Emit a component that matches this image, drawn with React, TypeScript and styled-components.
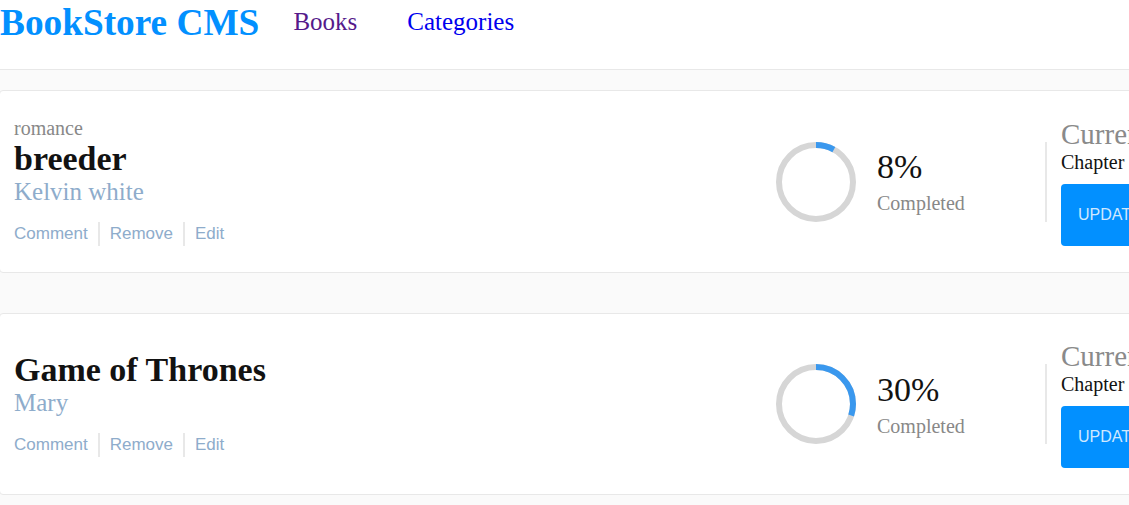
import React from 'react';
import styled, { createGlobalStyle } from 'styled-components';

const GlobalStyle = createGlobalStyle`
  html, body {
    margin: 0;
    padding: 0;
    overflow: hidden;
    background: #fafafa;
  }
  body {
    font-family: "Liberation Serif", "Times New Roman", serif;
  }
  * { box-sizing: border-box; }
`;

const Page = styled.div`
  width: 1129px;
  min-height: 505px;
  overflow: hidden;
  background: #fafafa;
`;

const Header = styled.header`
  display: flex;
  align-items: center;
  height: 70px;
  padding-bottom: 25px;
  background: #fff;
  border-bottom: 1px solid #e8e8e8;
`;

const Logo = styled.h1`
  margin: 0;
  font-size: 37.3px;
  font-weight: 700;
  color: #0290ff;
  white-space: nowrap;
`;

const Nav = styled.nav`
  display: flex;
  gap: 50px;
  margin-left: 34px;
`;

const NavLink = styled.a<{ $visited?: boolean }>`
  font-size: 25px;
  color: ${(p) => (p.$visited ? '#551a8b' : '#0000ee')};
  text-decoration: none;
`;

const BookList = styled.main`
  display: flex;
  flex-direction: column;
  gap: 40px;
  padding-top: 20px;
`;

const Card = styled.section`
  display: flex;
  align-items: center;
  width: 1317px;
  margin-left: -1px;
  padding: 26px 14px 26px 14px;
  background: #fff;
  border: 1px solid #e8e8e8;
  border-radius: 4px;
`;

const Info = styled.div`
  flex: 1;
  display: flex;
  flex-direction: column;
`;

const Category = styled.span`
  font-size: 20px;
  color: #888;
`;

const Title = styled.h2`
  margin: 0;
  font-size: 34px;
  font-weight: 700;
  color: #121212;
`;

const Author = styled.span`
  font-size: 25px;
  color: #8eaccb;
`;

const Actions = styled.div`
  display: flex;
  margin-top: 16px;
`;

const ActionButton = styled.button`
  padding: 2px 10px;
  margin: 0;
  background: none;
  border: none;
  border-right: 2px solid #e8e8e8;
  font-family: "Liberation Sans", Arial, sans-serif;
  font-size: 17px;
  color: #8eaccb;
  cursor: pointer;
  &:first-child { padding-left: 0; }
  &:last-child { border-right: none; }
`;

const Progress = styled.div`
  display: flex;
  align-items: center;
  gap: 21px;
  width: 269px;
`;

const Ring = styled.svg`
  width: 80px;
  height: 80px;
  flex-shrink: 0;
`;

const Stats = styled.div`
  display: flex;
  flex-direction: column;
`;

const Percent = styled.span`
  font-size: 34px;
  color: #121212;
`;

const Completed = styled.span`
  margin-top: 6px;
  font-size: 20px;
  color: #888;
`;

const Divider = styled.div`
  width: 2px;
  height: 80px;
  background: #e8e8e8;
`;

const Chapter = styled.div`
  display: flex;
  flex-direction: column;
  align-items: flex-start;
  margin-left: 14px;
  width: 240px;
`;

const ChapterLabel = styled.span`
  font-size: 29px;
  color: #8a8a8a;
  white-space: nowrap;
`;

const ChapterName = styled.span`
  font-size: 20px;
  color: #121212;
  white-space: nowrap;
`;

const UpdateButton = styled.button`
  margin-top: 10px;
  height: 62px;
  padding: 0 17px;
  border: none;
  border-radius: 4px;
  background: #0290ff;
  color: #cfe8ff;
  font-family: "Liberation Sans", Arial, sans-serif;
  font-size: 16px;
  white-space: nowrap;
  cursor: pointer;
`;

type Book = { category?: string; title: string; author: string; progress: number; chapter: string };

const books: Book[] = [
  { category: 'romance', title: 'breeder', author: 'Kelvin white', progress: 8, chapter: 'Chapter 17' },
  { title: 'Game of Thrones', author: 'Mary', progress: 30, chapter: 'Chapter 17' },
];

const ProgressRing = ({ value }: { value: number }) => {
  const r = 37;
  const c = 2 * Math.PI * r;
  return (
    <Ring viewBox="0 0 80 80">
      <circle cx="40" cy="40" r={r} fill="none" stroke="#d6d6d6" strokeWidth="6" />
      <circle
        cx="40"
        cy="40"
        r={r}
        fill="none"
        stroke="#3a98ee"
        strokeWidth="6"
        strokeDasharray={`${(c * value) / 100} ${c}`}
        transform="rotate(-90 40 40)"
      />
    </Ring>
  );
};

export default function App() {
  return (
    <Page>
      <GlobalStyle />
      <Header>
        <Logo>BookStore CMS</Logo>
        <Nav>
          <NavLink href="#" $visited>Books</NavLink>
          <NavLink href="#">Categories</NavLink>
        </Nav>
      </Header>
      <BookList>
        {books.map((b) => (
          <Card key={b.title}>
            <Info>
              {b.category && <Category>{b.category}</Category>}
              <Title>{b.title}</Title>
              <Author>{b.author}</Author>
              <Actions>
                <ActionButton>Comment</ActionButton>
                <ActionButton>Remove</ActionButton>
                <ActionButton>Edit</ActionButton>
              </Actions>
            </Info>
            <Progress>
              <ProgressRing value={b.progress} />
              <Stats>
                <Percent>{b.progress}%</Percent>
                <Completed>Completed</Completed>
              </Stats>
            </Progress>
            <Divider />
            <Chapter>
              <ChapterLabel>Current Chapter</ChapterLabel>
              <ChapterName>{b.chapter}</ChapterName>
              <UpdateButton>UPDATE PROGRESS</UpdateButton>
            </Chapter>
          </Card>
        ))}
      </BookList>
    </Page>
  );
}
